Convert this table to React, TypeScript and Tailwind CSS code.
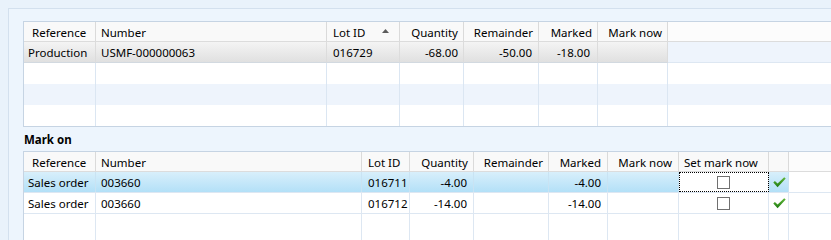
import React from "react";

type Col = { label: string; w: string; right?: boolean; hp: string; bp: string; sort?: boolean };

const topCols: Col[] = [
  { label: "Reference", w: "w-[72px]", hp: "pl-[8px]", bp: "pl-[4px]" },
  { label: "Number", w: "w-[231px]", hp: "pl-[5px]", bp: "pl-[5px]" },
  { label: "Lot ID", w: "w-[73px]", hp: "pl-[6px]", bp: "pl-[6px]", sort: true },
  { label: "Quantity", w: "w-[64px]", right: true, hp: "pr-[5px]", bp: "pr-[5px]" },
  { label: "Remainder", w: "w-[75px]", right: true, hp: "pr-[5px]", bp: "pr-[6px]" },
  { label: "Marked", w: "w-[59px]", right: true, hp: "pr-[5px]", bp: "pr-[7px]" },
  { label: "Mark now", w: "w-[70px]", right: true, hp: "pr-[5px]", bp: "pr-[5px]" },
];

const botCols: Col[] = [
  { label: "Reference", w: "w-[72px]", hp: "pl-[8px]", bp: "pl-[4px]" },
  { label: "Number", w: "w-[266px]", hp: "pl-[5px]", bp: "pl-[5px]" },
  { label: "Lot ID", w: "w-[48px]", hp: "pl-[6px]", bp: "pl-[6px]" },
  { label: "Quantity", w: "w-[64px]", right: true, hp: "pr-[5px]", bp: "pr-[6px]" },
  { label: "Remainder", w: "w-[75px]", right: true, hp: "pr-[5px]", bp: "pr-[6px]" },
  { label: "Marked", w: "w-[59px]", right: true, hp: "pr-[6px]", bp: "pr-[6px]" },
  { label: "Mark now", w: "w-[71px]", right: true, hp: "pr-[6px]", bp: "pr-[6px]" },
  { label: "Set mark now", w: "w-[90px]", hp: "pl-[5px]", bp: "" },
  { label: "", w: "w-[20px]", hp: "", bp: "" },
];

function Header({ cols }: { cols: Col[] }) {
  return (
    <div className="flex h-[20px] shrink-0 border-b border-[#dcdcdc] bg-[#fbfbfb]">
      {cols.map((c, i) => (
        <div
          key={i}
          className={`${c.w} ${c.right ? "justify-end " + c.hp : c.hp} flex h-full shrink-0 items-center whitespace-nowrap border-r border-[#dadada] bg-[#f9f9f9] pt-[2px] ${c.sort ? "justify-between pr-[10px]" : ""}`}
        >
          <span>{c.label}</span>
          {c.sort && (
            <svg width="7" height="4" viewBox="0 0 7 4" className="mb-[4px]">
              <path d="M0 4 L3.5 0 L7 4 Z" fill="#5c5c5c" />
            </svg>
          )}
        </div>
      ))}
      <div className="flex-1 bg-[#fcfcfc]" />
    </div>
  );
}

function Check() {
  return (
    <svg width="13" height="11" viewBox="0 0 13 11">
      <defs>
        <linearGradient id="cg" x1="0" y1="0" x2="0" y2="1">
          <stop offset="0" stopColor="#62b83a" />
          <stop offset="1" stopColor="#1d7a10" />
        </linearGradient>
      </defs>
      <path d="M0.3 5.6 L1.9 4.1 L4.6 6.6 L11.2 0.2 L12.7 1.6 L4.6 10.3 Z" fill="url(#cg)" />
    </svg>
  );
}

function Box() {
  return <div className="h-[13px] w-[13px] border border-[#707070] bg-white" />;
}

export default function App() {
  const topRows = [
    ["Production", "USMF-000000063", "016729", "-68.00", "-50.00", "-18.00", ""],
  ];
  const botRows = [
    ["Sales order", "003660", "016711", "-4.00", "", "-4.00", ""],
    ["Sales order", "003660", "016712", "-14.00", "", "-14.00", ""],
  ];

  return (
    <div className="h-[240px] w-[831px] overflow-hidden bg-[#e9f2fb] pl-[8px] pt-[8px] font-['Noto_Sans',sans-serif] text-[11.5px] leading-none text-[#000]">
      <div className="h-full border-l border-t border-[#d3e0ee] bg-[#edf5fd] pl-[14px] pt-[12px]">
        {/* Top grid */}
        <div className="flex h-[106px] flex-col overflow-hidden border-b border-l border-t border-[#c6d4e3] bg-white">
          <Header cols={topCols} />
          {/* selected gray row */}
          <div className="flex h-[21px] shrink-0 bg-[#eef4fc]">
            {topCols.map((c, j) => (
              <div
                key={j}
                className={`${c.w} ${c.right ? "justify-end " + c.bp : c.bp} flex h-full shrink-0 items-center whitespace-nowrap border-b border-r border-b-[#d2d9e0] border-r-[#dcdcdc] bg-gradient-to-b from-[#f4f4f4] to-[#e0e0e0] pt-[1px]`}
              >
                {topRows[0][j]}
              </div>
            ))}
            <div className="flex-1 border-b border-[#dde7f2]" />
          </div>
          {[0, 1, 2].map((r) => (
            <div key={r} className={`flex h-[21px] shrink-0 ${r === 1 ? "bg-[#eef4fc]" : "bg-white"}`}>
              {topCols.map((c, j) => (
                <div key={j} className={`${c.w} h-full shrink-0 border-r border-[#dbe6f2]`} />
              ))}
              <div className="flex-1" />
            </div>
          ))}
        </div>

        {/* Mark on label */}
        <div className="flex h-[24px] items-center pl-[1px] pt-[1px] font-bold text-[#000]">Mark on</div>

        {/* Bottom grid */}
        <div className="flex h-[200px] flex-col overflow-hidden border-l border-t border-[#c6d4e3] bg-white">
          <Header cols={botCols} />
          {botRows.map((row, r) => (
            <div key={r} className="flex h-[21px] shrink-0 border-b border-[#dde7f2]">
              {botCols.map((c, j) => {
                const sel = r === 0;
                const base = `${c.w} flex h-full shrink-0 items-center whitespace-nowrap border-r ${
                  sel ? "border-[#c9e3f3] bg-gradient-to-b from-[#d8effb] to-[#b3e0f7]" : "border-[#dde7f2]"
                }`;
                if (j === 7) {
                  return (
                    <div
                      key={j}
                      className={`${c.w} flex h-full shrink-0 items-center justify-center border-r border-[#dde7f2] bg-white ${
                        sel ? "outline-1 -outline-offset-1 outline-dotted outline-black" : ""
                      }`}
                    >
                      <Box />
                    </div>
                  );
                }
                if (j === 8) {
                  return (
                    <div key={j} className={`${base} pl-[4px] pt-[1px]`}>
                      <Check />
                    </div>
                  );
                }
                return (
                  <div key={j} className={`${base} ${c.right ? "justify-end " + c.bp : c.bp} pt-[1px]`}>
                    {row[j]}
                  </div>
                );
              })}
              <div className="flex-1" />
            </div>
          ))}
          <div className="flex flex-1">
            {botCols.map((c, j) => (
              <div key={j} className={`${c.w} h-full shrink-0 border-r border-[#dde7f2]`} />
            ))}
          </div>
        </div>
      </div>
    </div>
  );
}
